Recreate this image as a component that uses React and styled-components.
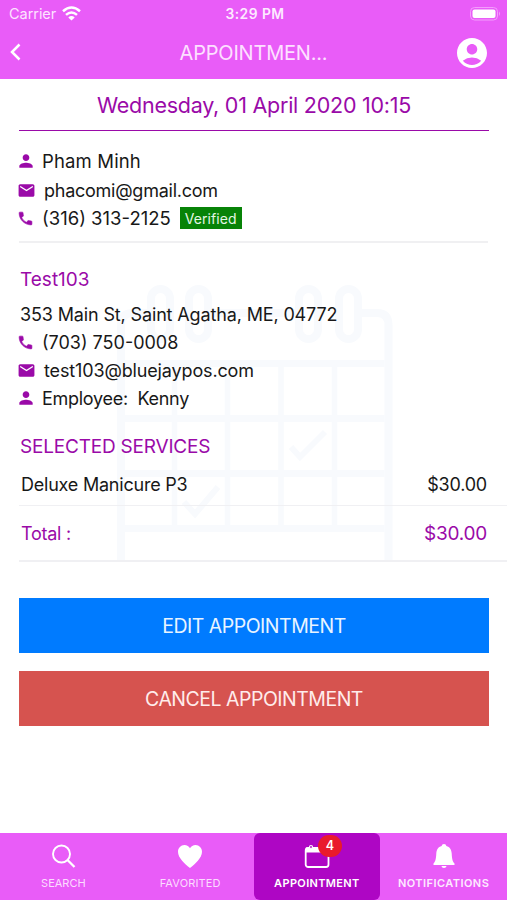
import React from "react";
import styled, { createGlobalStyle } from "styled-components";
import { MdPerson, MdEmail, MdAccountCircle } from "react-icons/md";

const GlobalStyle = createGlobalStyle`
  * { box-sizing: border-box; }
  body { margin: 0; background: #fff; font-family: Inter, "Liberation Sans", sans-serif; }
`;

const violet = "#e95cf8";
const purple = "#9a0aa8";

const Screen = styled.div`
  width: 507px;
  height: 900px;
  display: flex;
  flex-direction: column;
  background: #fff;
  overflow: hidden;
`;

const Text = styled.span`
  display: block;
  font-size: ${(p) => p.$size}px;
  letter-spacing: ${(p) => p.$track || 0}px;
  font-weight: ${(p) => p.$weight || 400};
  color: ${(p) => p.$color || "#181818"};
  padding-top: ${(p) => p.$drop || 0}px;
  white-space: pre;
  line-height: 1;
`;

const StatusBar = styled.div`
  height: 27px;
  flex: none;
  background: ${violet};
  display: grid;
  grid-template-columns: 1fr auto 1fr;
  align-items: center;
  padding: 0 6px 0 9px;
`;

const Carrier = styled.div`
  display: flex;
  align-items: center;
  gap: 6px;
`;

const Battery = styled.svg`
  justify-self: end;
`;

const Header = styled.header`
  height: 52px;
  flex: none;
  background: ${violet};
  display: grid;
  grid-template-columns: 60px 1fr 60px;
  align-items: center;
  justify-items: center;
`;

const BackButton = styled.button`
  justify-self: start;
  border: 0;
  padding: 0 0 3px 9px;
  background: none;
  display: flex;
`;

const Avatar = styled.div`
  display: flex;
  color: #fff;
  padding-right: 10px;
`;

const Content = styled.main`
  flex: 1;
  position: relative;
  padding-left: 19px;
`;

const Watermark = styled.svg`
  position: absolute;
  left: 100px;
  top: 191px;
`;

const Sheet = styled.div`
  position: relative;
  display: flex;
  flex-direction: column;
`;

const DateHeading = styled.div`
  height: 52px;
  margin-right: 18px;
  border-bottom: 1px solid ${purple};
  display: flex;
  justify-content: center;
  align-items: center;
`;

const Contact = styled.section`
  height: 112px;
  margin-right: 19px;
  padding-top: 15px;
  border-bottom: 2px solid #f0f0f2;
`;

const Row = styled.div`
  height: ${(p) => p.$height || 28}px;
  display: flex;
  align-items: center;
`;

const RowIcon = styled.span`
  display: flex;
  flex: none;
  width: ${(p) => p.$width}px;
  margin-left: ${(p) => p.$shift}px;
  color: ${purple};
`;

const Verified = styled.span`
  width: 62px;
  height: 22px;
  margin-left: 9px;
  padding-top: 2px;
  background: #078307;
  display: flex;
  align-items: center;
  justify-content: center;
`;

const Salon = styled.section`
  padding-top: 15px;
`;

const Title = styled.div`
  height: ${(p) => p.$height}px;
  margin-top: ${(p) => p.$gap || 0}px;
  padding-left: 1px;
  display: flex;
  align-items: center;
`;

const LineItem = styled.div`
  height: ${(p) => p.$height}px;
  padding: 0 20px 0 2px;
  border-bottom: ${(p) => p.$rule}px solid #f0f0f3;
  display: flex;
  align-items: center;
  justify-content: space-between;
`;

const Actions = styled.div`
  display: flex;
  flex-direction: column;
  gap: 18px;
  padding: 36px 18px 0 0;
`;

const Action = styled.button`
  height: 55px;
  border: 0;
  padding: 0;
  display: flex;
  align-items: center;
  justify-content: center;
  font-family: inherit;
  background: ${(p) => p.$color};
`;

const TabBar = styled.nav`
  height: 67px;
  flex: none;
  display: grid;
  grid-template-columns: repeat(4, 1fr);
  background: ${violet};
`;

const Tab = styled.div`
  display: flex;
  flex-direction: column;
  align-items: center;
  padding-top: 10px;
  gap: 9px;
  border-radius: 6px;
  background: ${(p) => (p.$active ? "#ae06c4" : "transparent")};
`;

const TabIcon = styled.div`
  position: relative;
  display: flex;
`;

const Badge = styled.span`
  position: absolute;
  left: 14px;
  top: -8px;
  width: 24px;
  height: 22px;
  border-radius: 11px;
  background: #e91a2c;
  display: flex;
  align-items: center;
  justify-content: center;
`;

const RINGS = [151, 189, 299, 339];

function CalendarWatermark() {
  return (
    <Watermark width="310" height="291" viewBox="100 270 310 291" fill="none" stroke="#f8fafd">
      <g strokeWidth="8">
        <path d="M121 561V325Q121 313 133 313H147M211 313H295M362 313H377Q388.500 313 388.500 325V561" />
        {RINGS.map((x) => (
          <rect key={x} x={x} y="289" width="19" height="50" rx="9.500" />
        ))}
      </g>
      <path strokeWidth="7" d="M125 363.500H384.500M125 418.500H384.500M125 473.500H384.500M125 528.500H384.500" />
      <path strokeWidth="5.500" d="M174.500 364V528M227.500 364V528M281 364V528M334.500 364V528" />
      <path strokeWidth="6" d="M291 447L300 457L325 432M184 502L195 514L218 487" />
    </Watermark>
  );
}

function Wifi() {
  return (
    <svg width="19" height="15" viewBox="0 0 19 15" fill="none" stroke="#fff" strokeWidth="2.500">
      <path d="M1 5.300Q9.500-2.300 18 5.300" />
      <path d="M4 8.900Q9.500 4 15 8.900" />
      <path d="M6.300 11.400Q9.500 8.800 12.700 11.400L9.500 14.500Z" fill="#fff" stroke="none" />
    </svg>
  );
}

const PersonIcon = () => <RowIcon $width={26} $shift={-3}><MdPerson size={20} /></RowIcon>;
const EmailIcon = () => <RowIcon $width={27} $shift={-2}><MdEmail size={19} /></RowIcon>;
const PhoneIcon = () => (
  <RowIcon $width={25} $shift={-2}>
    <svg width="17" height="17" viewBox="0 0 24 24" fill="currentColor" stroke="currentColor" strokeWidth="0.900" strokeLinejoin="round">
      <path d="M6.620 10.790c1.440 2.830 3.760 5.140 6.590 6.590l2.200-2.200c.27-.27.67-.36 1.020-.24 1.120.37 2.330.57 3.570.57.55 0 1 .45 1 1V20c0 .55-.45 1-1 1-9.390 0-17-7.610-17-17 0-.55.45-1 1-1h3.500c.55 0 1 .45 1 1 0 1.250.2 2.450.57 3.570.11.35.03.74-.25 1.020l-2.200 2.200z" />
    </svg>
  </RowIcon>
);

export default function App() {
  return (
    <Screen>
      <GlobalStyle />
      <StatusBar>
        <Carrier>
          <Text $size={14.5} $track={-0.05} $drop={1} $color="#fde3ff">Carrier</Text>
          <Wifi />
        </Carrier>
        <Text $size={13.8} $track={0.5} $drop={2} $weight={600} $color="#fdeaff">3:29 PM</Text>
        <Battery width="31" height="14" viewBox="0 0 31 14">
          <rect x="0.500" y="0.500" width="27" height="12.500" rx="4" fill="none" stroke="#f49dfc" />
          <rect x="2.500" y="2.500" width="23" height="8.500" rx="2" fill="#fff" />
          <path d="M29 4.500Q31 6.700 29 9Z" fill="#f49dfc" />
        </Battery>
      </StatusBar>
      <Header>
        <BackButton aria-label="Back">
          <svg width="13" height="18" viewBox="0 0 13 18" fill="none" stroke="#fff" strokeWidth="2.500">
            <path d="M10.500 1.500L3 9L10.500 16.500" />
          </svg>
        </BackButton>
        <Text $size={20} $track={-0.2} $color="#fde0ff">APPOINTMEN...</Text>
        <Avatar><MdAccountCircle size={36} /></Avatar>
      </Header>
      <Content>
        <CalendarWatermark />
        <Sheet>
          <DateHeading>
            <Text $size={21.5} $track={-0.25} $drop={2} $color={purple}>Wednesday, 01 April 2020 10:15</Text>
          </DateHeading>
          <Contact>
            <Row $height={30}>
              <PersonIcon />
              <Text $size={18.5} $track={0.15}>Pham Minh</Text>
            </Row>
            <Row>
              <EmailIcon />
              <Text $size={18} $track={-0.25} $drop={2}>phacomi@gmail.com</Text>
            </Row>
            <Row>
              <PhoneIcon />
              <Text $size={18.5}>(316) 313-2125</Text>
              <Verified><Text $size={14} $track={0.1} $color="#e4f7e4">Verified</Text></Verified>
            </Row>
          </Contact>
          <Salon>
            <Title $height={42}><Text $size={19} $color={purple}>Test103</Text></Title>
            <Title $height={28}><Text $size={18} $track={-0.14} $drop={2}>353 Main St, Saint Agatha, ME, 04772</Text></Title>
            <Row>
              <PhoneIcon />
              <Text $size={18} $drop={2}>(703) 750-0008</Text>
            </Row>
            <Row>
              <EmailIcon />
              <Text $size={18} $track={-0.14} $drop={2}>test103@bluejaypos.com</Text>
            </Row>
            <Row>
              <PersonIcon />
              <Text $size={18} $track={-0.28} $drop={2}>Employee:  Kenny</Text>
            </Row>
            <Title $height={34} $gap={17}>
              <Text $size={19} $track={-0.2} $color={purple}>SELECTED SERVICES</Text>
            </Title>
            <LineItem $height={43} $rule={1}>
              <Text $size={18} $track={-0.22} $drop={2}>Deluxe Manicure P3</Text>
              <Text $size={18} $track={-0.2} $drop={2}>$30.00</Text>
            </LineItem>
            <LineItem $height={56} $rule={2}>
              <Text $size={18} $track={-0.25} $drop={2} $color={purple}>Total :</Text>
              <Text $size={19} $track={-0.25} $color={purple}>$30.00</Text>
            </LineItem>
          </Salon>
          <Actions>
            <Action $color="#007bff"><Text $size={19.5} $track={-0.5} $drop={2} $color="#e8f4ff">EDIT APPOINTMENT</Text></Action>
            <Action $color="#d6534f"><Text $size={19.5} $track={-0.5} $drop={2} $color="#ffeceb">CANCEL APPOINTMENT</Text></Action>
          </Actions>
        </Sheet>
      </Content>
      <TabBar>
        <Tab>
          <TabIcon>
            <svg width="26" height="26" viewBox="0 0 26 26" fill="none" stroke="#fff" strokeWidth="1.900">
              <circle cx="11.500" cy="11" r="8.500" />
              <path d="M17.500 17L24.500 24" strokeWidth="2.300" />
            </svg>
          </TabIcon>
          <Text $size={11} $color="#fcdcff">SEARCH</Text>
        </Tab>
        <Tab>
          <TabIcon>
            <svg width="26" height="26" viewBox="0 0 26 26" fill="#fff">
              <path d="M13 25C8 21 1 15 1 8.700C1 5 4 2 7.300 2C10 2 12 3.300 13 5.200C14 3.300 16 2 18.700 2C22 2 25 5 25 8.700C25 15 18 21 13 25Z" />
            </svg>
          </TabIcon>
          <Text $size={11} $track={0.15} $color="#fcdcff">FAVORITED</Text>
        </Tab>
        <Tab $active>
          <TabIcon>
            <svg width="26" height="26" viewBox="0 0 26 26" fill="none" stroke="#fff">
              <rect x="1.700" y="5" width="22.800" height="19" rx="2.500" strokeWidth="1.800" />
              <path d="M2 7H24" strokeWidth="5" />
              <circle cx="7" cy="4" r="1.500" fill="#ae06c4" strokeWidth="1.200" />
            </svg>
            <Badge><Text $size={12.5} $weight={600} $color="#fff">4</Text></Badge>
          </TabIcon>
          <Text $size={11} $track={0.35} $weight={600} $color="#fff">APPOINTMENT</Text>
        </Tab>
        <Tab>
          <TabIcon>
            <svg width="26" height="26" viewBox="0 0 26 26" fill="#fff">
              <path d="M13 1C14.300 1 15.200 1.900 15.300 3C19 3.900 20.500 7 20.700 10.500C21 16 21.500 18.500 23.500 20.500V22H2.500V20.500C4.500 18.500 5 16 5.300 10.500C5.500 7 7 3.900 10.700 3C10.800 1.900 11.700 1 13 1ZM10.500 23H15.500C15.200 25.600 10.800 25.600 10.500 23Z" />
            </svg>
          </TabIcon>
          <Text $size={11} $track={0.45} $weight={600} $color="#fdeaff">NOTIFICATIONS</Text>
        </Tab>
      </TabBar>
    </Screen>
  );
}
